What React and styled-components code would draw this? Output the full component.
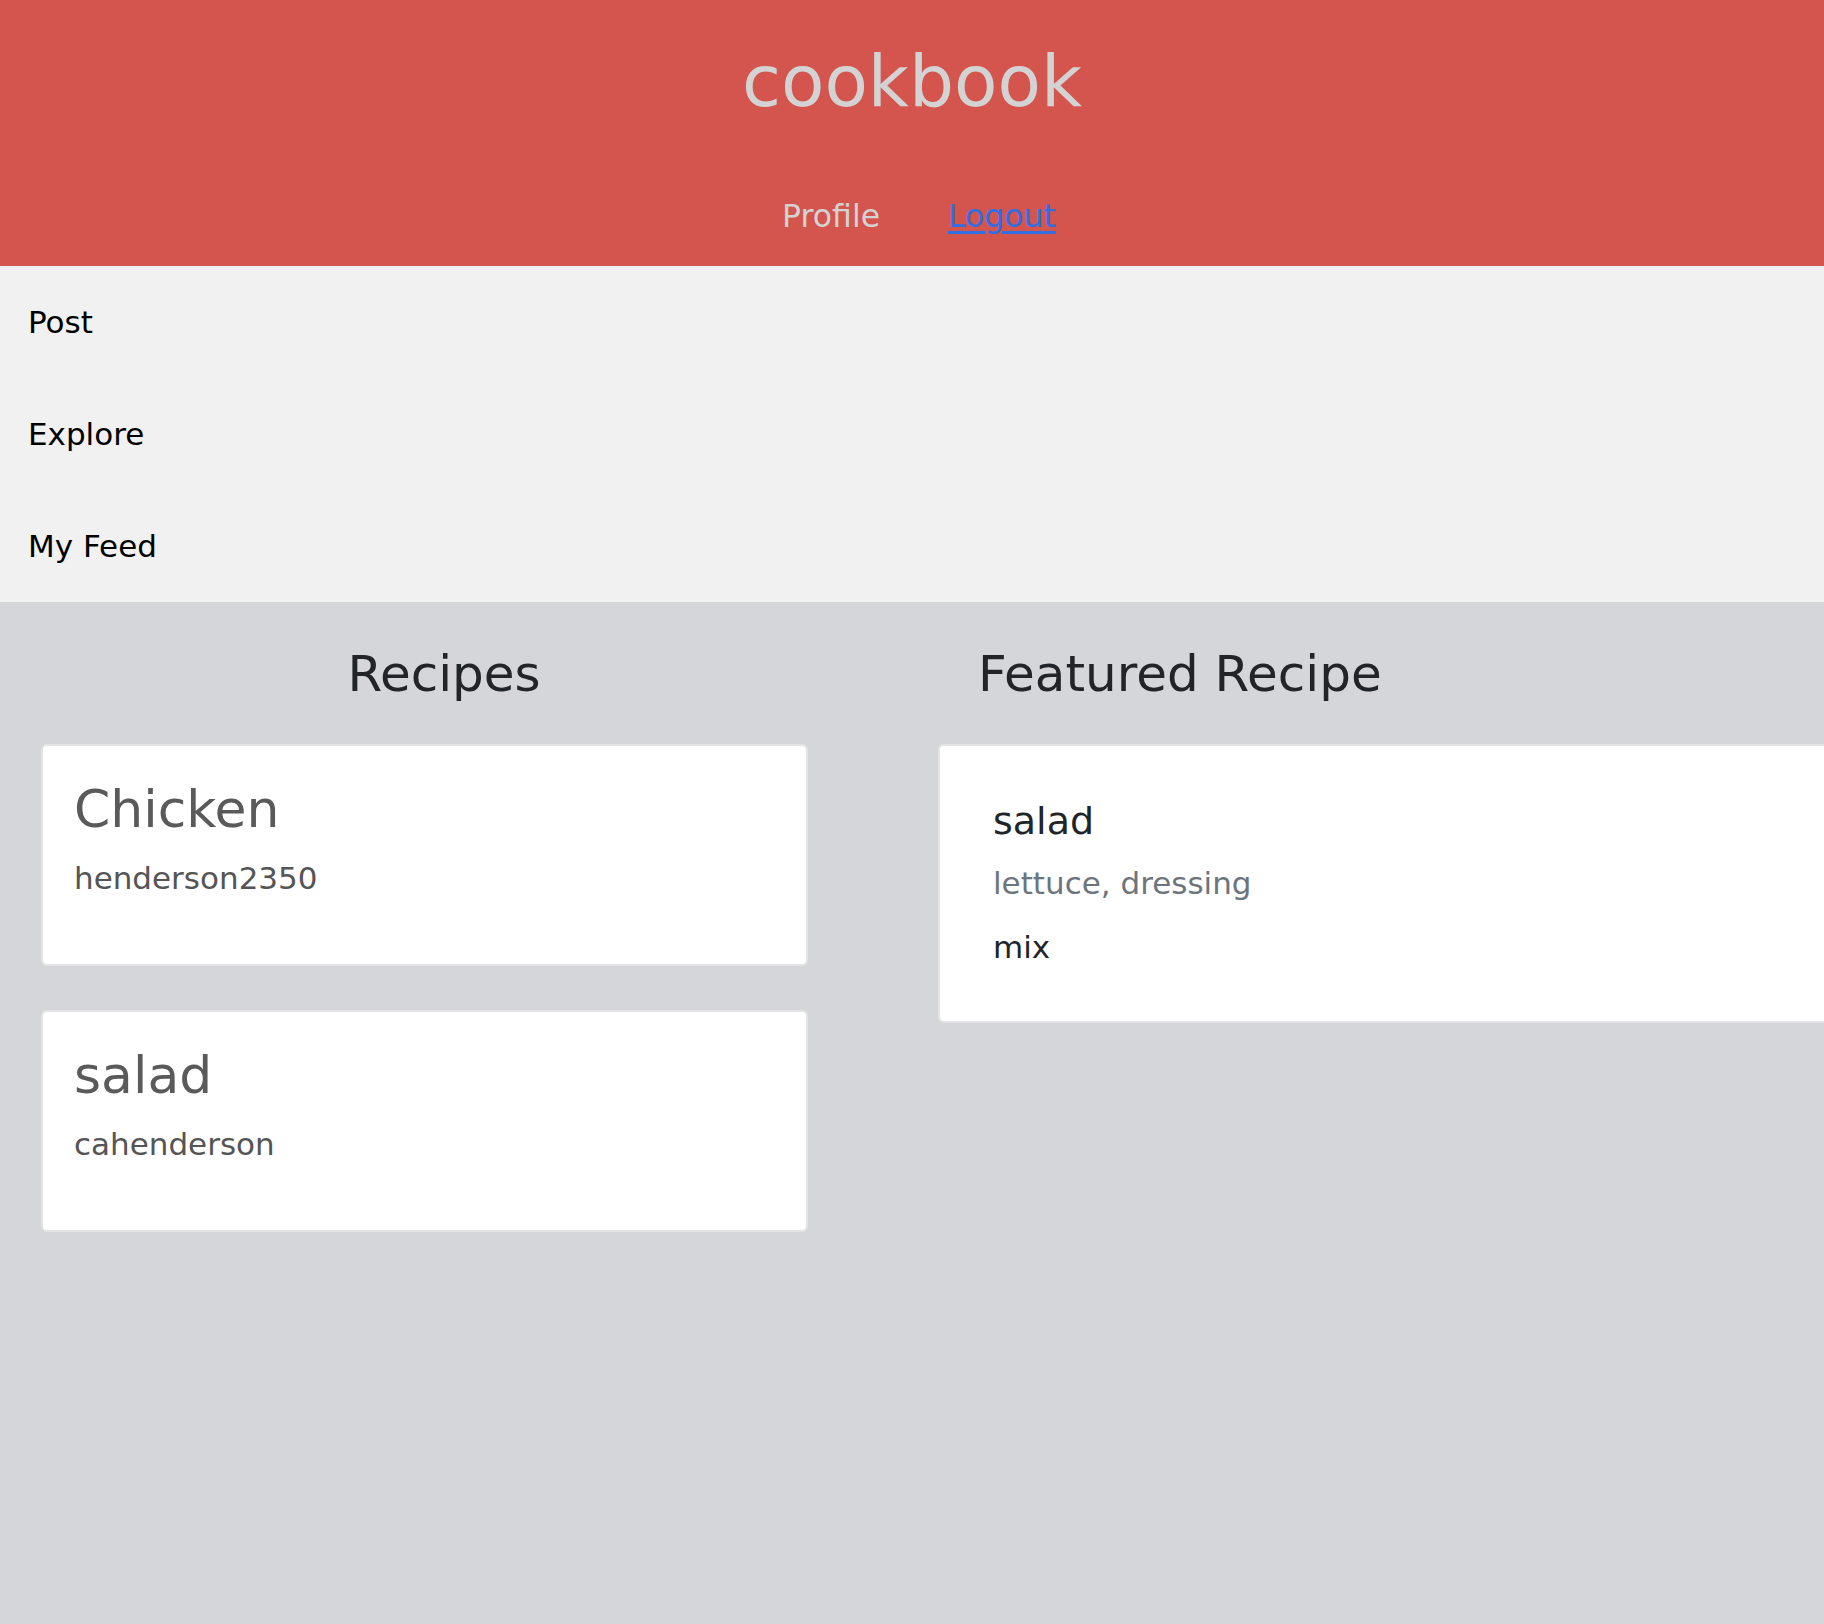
import styled, { createGlobalStyle } from "styled-components";

const GlobalStyle = createGlobalStyle`
  * {
    box-sizing: border-box;
  }

  html,
  body {
    margin: 0;
    padding: 0;
    overflow-x: hidden;
    font-family: "DejaVu Sans", "Liberation Sans", sans-serif;
    background-color: #d5d6da;
  }
`;

const palette = {
  header: "#d4544e",
  headerText: "#d3d3d3",
  link: "#2f6fe4",
  navBg: "#f1f1f1",
  mainBg: "#d5d6da",
  dark: "#212529",
  cardTitle: "#5a5a5a",
  cardSub: "#555555",
  muted: "#6c757d",
  cardBorder: "#e4e4e6",
};

const Page = styled.div`
  display: flex;
  flex-direction: column;
  min-height: 100vh;
`;

const Header = styled.header`
  display: flex;
  flex-direction: column;
  align-items: center;
  height: 266px;
  padding-top: 40px;
  background-color: ${palette.header};

  .header__title {
    margin: 0;
    font-weight: 400;
    font-size: 71px;
    line-height: 84px;
    color: ${palette.headerText};
  }
`;

const HeaderLinks = styled.nav`
  display: flex;
  gap: 68px;
  margin-top: 74px;
  padding-left: 14px;
`;

const HeaderLink = styled.a`
  font-size: 31.5px;
  line-height: 36px;
  color: ${({ $active }) => ($active ? palette.link : palette.headerText)};
  text-decoration: ${({ $active }) => ($active ? "underline" : "none")};
  text-decoration-thickness: 3px;
  text-underline-offset: 4px;
  cursor: pointer;
`;

const SideNav = styled.ul`
  margin: 0;
  padding: 0;
  list-style: none;
  background-color: ${palette.navBg};
`;

const SideNavItem = styled.li`
  display: flex;
  align-items: center;
  height: 112px;
  padding-left: 28px;
  font-size: 31px;
  color: #000;
`;

const Main = styled.main`
  flex: 1;
  display: grid;
  grid-template-columns: 888px 1fr;
  padding-top: 43px;
  background-color: ${palette.mainBg};
  overflow: hidden;
`;

const Column = styled.section`
  display: flex;
  flex-direction: column;
  align-items: ${({ $center }) => ($center ? "center" : "flex-start")};
  padding-left: ${({ $offset }) => $offset || 0}px;
`;

const Heading = styled.h2`
  margin: 0 0 41px;
  padding-left: ${({ $indent }) => $indent || 0}px;
  font-weight: 400;
  font-size: 50px;
  line-height: 58px;
  color: ${palette.dark};
`;

const CardList = styled.div`
  display: flex;
  flex-direction: column;
  gap: 44px;
  align-self: stretch;
  padding: 0 80px 0 41px;
`;

const Card = styled.div`
  background-color: #fff;
  border: 2px solid ${palette.cardBorder};
  border-radius: 6px;

  .card__title {
    margin: 0 0 21px;
    font-weight: 400;
    font-size: 52px;
    line-height: 60px;
    color: ${palette.cardTitle};
  }

  .card__sub {
    margin: 0;
    font-size: 31px;
    line-height: 36px;
    color: ${palette.cardSub};
  }
`;

const RecipeCard = styled(Card)`
  height: 222px;
  padding: 33px 20px 0 31px;
`;

const FeaturedCard = styled(Card)`
  width: 1000px;
  height: 279px;
  padding: 53px 20px 0 53px;

  .featured__title {
    margin: 0 0 22px;
    font-weight: 400;
    font-size: 38px;
    line-height: 44px;
    color: ${palette.dark};
  }

  .featured__ingredients {
    margin: 0 0 28px;
    font-size: 31px;
    line-height: 36px;
    color: ${palette.muted};
  }

  .featured__steps {
    margin: 0;
    font-size: 31px;
    line-height: 36px;
    color: ${palette.dark};
  }
`;

const recipes = [
  { id: 1, title: "Chicken", author: "henderson2350" },
  { id: 2, title: "salad", author: "cahenderson" },
];

const featured = {
  title: "salad",
  ingredients: "lettuce, dressing",
  steps: "mix",
};

export default function App() {
  return (
    <>
      <GlobalStyle />
      <Page>
        <Header>
          <h1 className="header__title">cookbook</h1>
          <HeaderLinks>
            <HeaderLink>Profile</HeaderLink>
            <HeaderLink $active href="#">
              Logout
            </HeaderLink>
          </HeaderLinks>
        </Header>

        <SideNav>
          <SideNavItem>Post</SideNavItem>
          <SideNavItem>Explore</SideNavItem>
          <SideNavItem>My Feed</SideNavItem>
        </SideNav>

        <Main>
          <Column $center>
            <Heading>Recipes</Heading>
            <CardList>
              {recipes.map((recipe) => (
                <RecipeCard key={recipe.id}>
                  <h3 className="card__title">{recipe.title}</h3>
                  <p className="card__sub">{recipe.author}</p>
                </RecipeCard>
              ))}
            </CardList>
          </Column>

          <Column $offset={50}>
            <Heading $indent={40}>Featured Recipe</Heading>
            <FeaturedCard>
              <h3 className="featured__title">{featured.title}</h3>
              <p className="featured__ingredients">{featured.ingredients}</p>
              <p className="featured__steps">{featured.steps}</p>
            </FeaturedCard>
          </Column>
        </Main>
      </Page>
    </>
  );
}
